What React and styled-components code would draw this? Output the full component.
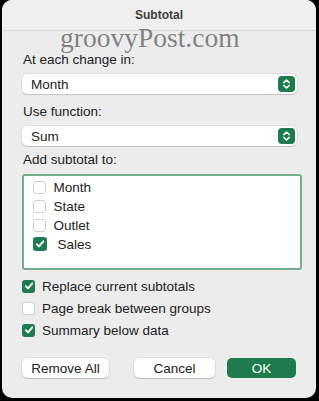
import React from "react";
import styled, { createGlobalStyle } from "styled-components";

const GlobalStyle = createGlobalStyle`
  html, body {
    margin: 0;
    padding: 0;
    background: #000;
  }
  body {
    font-family: "Liberation Sans", Arial, sans-serif;
    color: #222;
  }
`;

const fields = ["Month", "State", "Outlet", "Sales"];

const options = [
  { label: "Replace current subtotals", checked: true },
  { label: "Page break between groups", checked: false },
  { label: "Summary below data", checked: true },
];

const Check = ({ checked, size = 13 }) => (
  <Box $checked={checked} $size={size}>
    {checked && (
      <svg width="10" height="10" viewBox="0 0 10 10">
        <path
          d="M1.8 5.2 L4 7.4 L8.3 2.3"
          fill="none"
          stroke="#fff"
          strokeWidth="1.9"
          strokeLinecap="round"
          strokeLinejoin="round"
        />
      </svg>
    )}
  </Box>
);

const Select = ({ value }) => (
  <SelectBox>
    <span>{value}</span>
    <Stepper>
      <svg width="9" height="12" viewBox="0 0 9 12">
        <path
          d="M1.8 4.6 L4.5 2 L7.2 4.6 M1.8 7.4 L4.5 10 L7.2 7.4"
          fill="none"
          stroke="#fff"
          strokeWidth="1.5"
          strokeLinecap="round"
          strokeLinejoin="round"
        />
      </svg>
    </Stepper>
  </SelectBox>
);

const App = () => {
  return (
    <>
      <GlobalStyle />
      <Dialog>
        <TitleBar>Subtotal</TitleBar>
        <Watermark>groovyPost.com</Watermark>
        <Content>
          <Label $top={21}>At each change in:</Label>
          <Select value="Month" />
          <Label $top={10}>Use function:</Label>
          <Select value="Sum" />
          <Label $top={6}>Add subtotal to:</Label>
          <ListBox>
            {fields.map((f) => (
              <ListRow key={f}>
                <Check checked={f === "Sales"} size={f === "Sales" ? 14 : 13} />
                <ListText $shift={f === "Sales" ? 3 : 0}>{f}</ListText>
              </ListRow>
            ))}
          </ListBox>
          <Options>
            {options.map((o) => (
              <OptionRow key={o.label}>
                <Check checked={o.checked} />
                <span>{o.label}</span>
              </OptionRow>
            ))}
          </Options>
          <Buttons>
            <Button $w={87}>Remove All</Button>
            <Button $w={81} $gap={25}>
              Cancel
            </Button>
            <Button $w={69} $gap={12} $primary>
              OK
            </Button>
          </Buttons>
        </Content>
      </Dialog>
    </>
  );
};

const Dialog = styled.div`
  position: relative;
  width: 314px;
  height: 398px;
  margin-left: 2px;
  background: #ececec;
  border-radius: 10px;
  overflow: hidden;
  display: flex;
  flex-direction: column;
`;

const TitleBar = styled.div`
  height: 30px;
  flex: none;
  display: flex;
  align-items: center;
  justify-content: center;
  font-size: 12px;
  font-weight: bold;
  color: #3d3d3d;
  background: #efefef;
  border-bottom: 1px solid #d4d4d4;
`;

const Watermark = styled.div`
  position: absolute;
  left: 58px;
  top: 22px;
  font-family: "Liberation Serif", "Times New Roman", serif;
  font-size: 27.5px;
  color: rgba(110, 110, 110, 0.85);
  pointer-events: none;
`;

const Content = styled.div`
  display: flex;
  flex-direction: column;
  padding: 0 19px 0 20px;
  font-size: 13.5px;
`;

const Label = styled.div`
  margin-top: ${({ $top }) => $top}px;
  margin-left: 1px;
  line-height: 16px;
  margin-bottom: 6px;
`;

const SelectBox = styled.div`
  height: 20px;
  box-sizing: border-box;
  display: flex;
  align-items: center;
  justify-content: space-between;
  padding: 0 2px 0 9px;
  background: #fff;
  border-radius: 5px;
  box-shadow: 0 0 0 0.5px rgba(0, 0, 0, 0.12), 0 1px 1px rgba(0, 0, 0, 0.12);
`;

const Stepper = styled.div`
  width: 17px;
  height: 16px;
  border-radius: 4px;
  background: #1d7b4d;
  display: flex;
  align-items: center;
  justify-content: center;
`;

const ListBox = styled.div`
  width: 280px;
  height: 96px;
  box-sizing: border-box;
  border: 2.5px solid #74ae8d;
  border-radius: 3px;
  background: #fff;
  padding: 1.5px 0 0 8.5px;
  display: flex;
  flex-direction: column;
`;

const ListRow = styled.div`
  height: 19px;
  display: flex;
  align-items: center;
  gap: 8px;
`;

const ListText = styled.span`
  margin-left: ${({ $shift }) => $shift}px;
`;

const Box = styled.span`
  width: ${({ $size }) => $size}px;
  height: ${({ $size }) => $size}px;
  box-sizing: border-box;
  flex: none;
  border-radius: 3px;
  display: flex;
  align-items: center;
  justify-content: center;
  background: ${({ $checked }) => ($checked ? "#1d7b4d" : "#fff")};
  border: ${({ $checked }) => ($checked ? "none" : "1px solid #cfcfcf")};
`;

const Options = styled.div`
  margin-top: 5px;
  display: flex;
  flex-direction: column;
`;

const OptionRow = styled.div`
  height: 22px;
  display: flex;
  align-items: center;
  gap: 7px;
`;

const Buttons = styled.div`
  margin-top: 17px;
  display: flex;
`;

const Button = styled.button`
  width: ${({ $w }) => $w}px;
  height: 20px;
  margin-left: ${({ $gap = 0 }) => $gap}px;
  padding: 0;
  border: none;
  border-radius: 5px;
  font-family: inherit;
  font-size: 13.5px;
  color: ${({ $primary }) => ($primary ? "#fff" : "#222")};
  background: ${({ $primary }) => ($primary ? "#1d7b4d" : "#fff")};
  box-shadow: ${({ $primary }) =>
    $primary
      ? "none"
      : "0 0 0 0.5px rgba(0,0,0,0.14), 0 1px 1px rgba(0,0,0,0.14)"};
`;

export default App;
